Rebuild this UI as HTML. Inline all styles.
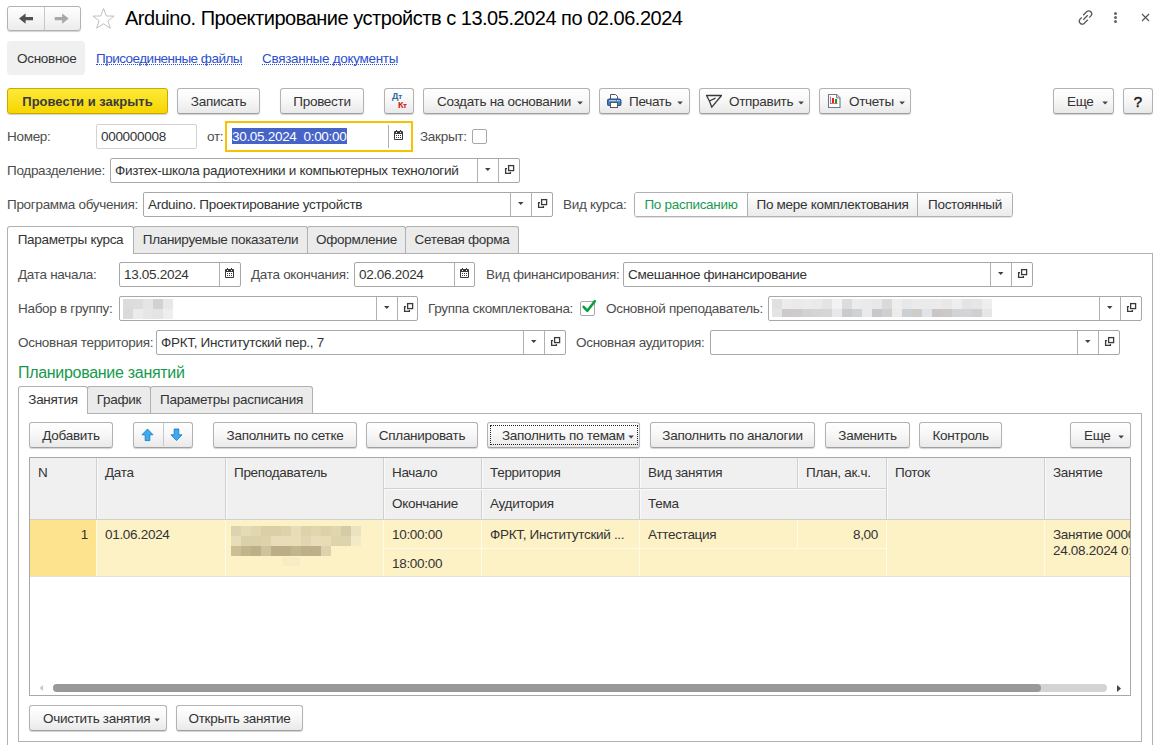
<!DOCTYPE html>
<html><head><meta charset="utf-8">
<style>
html,body{margin:0;padding:0;background:#fff;width:1162px;height:745px;overflow:hidden;position:relative}
body{font-family:"Liberation Sans",sans-serif;font-size:13.5px;letter-spacing:-0.3px;color:#333}
div,span{box-sizing:border-box}
.a{position:absolute}
.t{position:absolute;white-space:nowrap;line-height:15px;height:15px;color:#4d4d4d}
.v{color:#333}
.btn{position:absolute;height:26px;border:1px solid #b3b3b3;border-bottom-color:#a0a0a0;border-radius:3px;background:linear-gradient(#fff 0%,#f8f8f8 45%,#e9e9e9 100%);box-shadow:0 1px 1px rgba(0,0,0,.18);color:#333;white-space:nowrap;line-height:25px;text-align:center}
.inp{position:absolute;height:25px;border:1px solid #a8a8a8;border-radius:2px;background:#fff;white-space:nowrap;line-height:24px;color:#333;overflow:hidden}
.dv{position:absolute;top:0;bottom:0;width:1px;background:#b0b0b0}
.dd{position:absolute;top:9px;width:0;height:0;border-left:3.5px solid transparent;border-right:3.5px solid transparent;border-top:3.5px solid #444}
.arr{display:inline-block;width:0;height:0;border-left:3px solid transparent;border-right:3px solid transparent;border-top:3px solid #505050;vertical-align:middle;margin-left:7px;position:relative;top:-1px}
.tab{position:absolute;height:27px;border:1px solid #b0b0b0;border-bottom:none;border-radius:3px 3px 0 0;background:#ebebeb;color:#333;line-height:26px;white-space:nowrap;text-align:center}
.tab.act{background:#fff;height:28px}
.pnl{position:absolute;border:1px solid #b0b0b0}
</style></head><body>

<!-- header -->
<div class="a" style="left:7px;top:6px;width:74px;height:25px;border:1px solid #b3b3b3;border-radius:3px;background:linear-gradient(#fff,#ececec);box-shadow:0 1px 1px rgba(0,0,0,.18)"></div>
<div class="a" style="left:44px;top:7px;width:1px;height:23px;background:#c8c8c8"></div>
<svg class="a" style="left:17px;top:11px" width="20" height="14" viewBox="0 0 20 14"><path d="M2 7.6 L8.6 2.4 L8.6 6 L16 6 L16 9.3 L8.6 9.3 L8.6 12.8 Z" fill="#505050"/></svg>
<svg class="a" style="left:54px;top:11px" width="20" height="14" viewBox="0 0 20 14"><path d="M14.7 7.6 L8.1 2.4 L8.1 6 L0.7 6 L0.7 9.3 L8.1 9.3 L8.1 12.8 Z" fill="#a8a8a8"/></svg>
<svg class="a" style="left:91px;top:7px" width="25" height="23" viewBox="0 0 26 23"><path d="M13 1.2 L15.9 8.9 L24 9 L17.6 13.9 L20.1 21.6 L13 17 L5.9 21.6 L8.4 13.9 L2 9 L10.1 8.9 Z" fill="none" stroke="#bdbdbd" stroke-width="1"/></svg>
<div class="t" style="left:125px;top:7px;font-size:20px;letter-spacing:-0.48px;line-height:22px;height:22px;color:#000">Arduino. Проектирование устройств с 13.05.2024 по 02.06.2024</div>
<svg class="a" style="left:1077px;top:8.5px" width="17" height="17" viewBox="0 0 17 17"><g fill="none" stroke="#555" stroke-width="1.25" stroke-linecap="butt"><path d="M12.2 8.6 L14.1 6.7 A3 3 0 0 0 9.9 2.5 L6.2 6.2"/><path d="M4.8 8.4 L2.9 10.3 A3 3 0 0 0 7.1 14.5 L10.8 10.8"/><path d="M6.3 10.7 L10.7 6.3"/></g></svg>
<div class="a" style="left:1113.5px;top:12px;width:3px;height:3px;border-radius:50%;background:#666"></div>
<div class="a" style="left:1113.5px;top:16px;width:3px;height:3px;border-radius:50%;background:#666"></div>
<div class="a" style="left:1113.5px;top:20px;width:3px;height:3px;border-radius:50%;background:#666"></div>
<svg class="a" style="left:1141px;top:13px" width="10" height="10" viewBox="0 0 10 10"><path d="M1 1 L8 8 M8 1 L1 8" stroke="#555" stroke-width="1.2"/></svg>

<!-- nav tabs -->
<div class="a" style="left:7px;top:41px;width:78px;height:34px;background:#f0f0f0;border-radius:4px"></div>
<div class="t v" style="left:17px;top:51px">Основное</div>
<div class="t" style="left:96px;top:51px;color:#2b4fd0;letter-spacing:-0.52px">Присоединенные файлы</div>
<div class="a" style="left:96px;top:64px;width:146px;height:1px;border-top:1px dotted #2b4fd0"></div>
<div class="t" style="left:262px;top:51px;color:#2b4fd0">Связанные документы</div>
<div class="a" style="left:262px;top:64px;width:135px;height:1px;border-top:1px dotted #2b4fd0"></div>

<!-- toolbar -->
<div class="btn" style="left:7px;top:88px;width:161px;background:linear-gradient(#fde93a,#f6d600);border-color:#c8ab00;font-weight:bold;font-size:13px;letter-spacing:0;color:#3b3b3b">Провести и закрыть</div>
<div class="btn" style="left:177px;top:88px;width:83px">Записать</div>
<div class="btn" style="left:280px;top:88px;width:84px">Провести</div>
<div class="btn" style="left:384px;top:88px;width:30px"></div>
<div class="btn" style="left:423px;top:88px;width:167px;text-align:left;padding-left:13px">Создать на основании</div>
<div class="btn" style="left:599px;top:88px;width:91px;text-align:left;padding-left:29px">Печать</div>
<div class="btn" style="left:699px;top:88px;width:111px;text-align:left;padding-left:29px">Отправить</div>
<div class="btn" style="left:819px;top:88px;width:92px;text-align:left;padding-left:29px">Отчеты</div>
<div class="btn" style="left:1053px;top:88px;width:61px;text-align:left;padding-left:13px">Еще</div>
<div class="btn" style="left:1123px;top:88px;width:30px;color:#1a1a1a;font-size:15px;letter-spacing:0;-webkit-text-stroke:0.5px #1a1a1a;line-height:26px">?</div>

<!-- Номер row -->
<div class="t" style="left:7px;top:129px">Номер:</div>
<div class="inp" style="left:96px;top:124px;width:101px;padding-left:4px;border-color:#d2d2d2">000000008</div>
<div class="t" style="left:207px;top:129px">от:</div>
<div class="a" style="left:225px;top:121px;width:188px;height:31px;border:2px solid #f7c300"></div>
<div class="a" style="left:232px;top:128px;width:115px;height:16px;background:#4664c8"></div>
<div class="t" style="left:232px;top:129px;color:#fff">30.05.2024&nbsp;&nbsp;0:00:00</div>
<div class="a" style="left:388px;top:125px;width:1px;height:23px;background:#b0b0b0"></div>
<div class="t" style="left:420px;top:129px">Закрыт:</div>
<div class="a" style="left:472px;top:129px;width:15px;height:15px;border:1px solid #a8a8a8;border-radius:2px;background:#fff"></div>

<!-- Подразделение -->
<div class="t" style="left:7px;top:163px">Подразделение:</div>
<div class="inp" style="left:110px;top:158px;width:410px;padding-left:4px">Физтех-школа радиотехники и компьютерных технологий
  <div class="dv" style="left:366px"></div><div class="dv" style="left:387px"></div></div>

<!-- Программа -->
<div class="t" style="left:7px;top:197px">Программа обучения:</div>
<div class="inp" style="left:143px;top:192px;width:410px;padding-left:4px">Arduino. Проектирование устройств
  <div class="dv" style="left:366px"></div><div class="dv" style="left:387px"></div></div>
<div class="t" style="left:563px;top:197px">Вид курса:</div>
<div class="a" style="left:634px;top:192px;width:379px;height:25px;border:1px solid #b0b0b0;border-radius:3px;overflow:hidden;box-shadow:0 1px 1px rgba(0,0,0,.12)">
  <div class="a" style="left:0;top:0;width:112px;height:23px;background:#fff;color:#1a9a52;line-height:24px;text-align:center">По расписанию</div>
  <div class="a" style="left:112px;top:0;width:1px;height:23px;background:#b0b0b0"></div>
  <div class="a" style="left:113px;top:0;width:169px;height:23px;background:linear-gradient(#fff,#ebebeb);line-height:24px;text-align:center">По мере комплектования</div>
  <div class="a" style="left:282px;top:0;width:1px;height:23px;background:#b0b0b0"></div>
  <div class="a" style="left:283px;top:0;width:94px;height:23px;background:linear-gradient(#fff,#ebebeb);line-height:24px;text-align:center">Постоянный</div>
</div>

<!-- tabs -->
<div class="pnl" style="left:7px;top:253px;width:1146px;height:520px"></div>
<div class="tab" style="left:133px;top:226px;width:175px">Планируемые показатели</div>
<div class="tab" style="left:307px;top:226px;width:99px">Оформление</div>
<div class="tab" style="left:405px;top:226px;width:114px">Сетевая форма</div>
<div class="tab act" style="left:7px;top:226px;width:127px">Параметры курса</div>

<!-- panel row 1 -->
<div class="t" style="left:18px;top:267px">Дата начала:</div>
<div class="inp" style="left:119px;top:262px;width:122px;padding-left:4px">13.05.2024<div class="dv" style="left:99px"></div></div>
<div class="t" style="left:251px;top:267px">Дата окончания:</div>
<div class="inp" style="left:354px;top:262px;width:121px;padding-left:4px">02.06.2024<div class="dv" style="left:99px"></div></div>
<div class="t" style="left:486px;top:267px">Вид финансирования:</div>
<div class="inp" style="left:623px;top:262px;width:410px;padding-left:4px">Смешанное финансирование<div class="dv" style="left:366px"></div><div class="dv" style="left:387px"></div></div>

<!-- panel row 2 -->
<div class="t" style="left:18px;top:301px">Набор в группу:</div>
<div class="inp" style="left:119px;top:296px;width:299px"><div class="dv" style="left:256px"></div><div class="dv" style="left:277px"></div></div>
<div class="t" style="left:428px;top:301px">Группа скомплектована:</div>
<div class="a" style="left:580px;top:301px;width:15px;height:15px;border:1px solid #a8a8a8;border-radius:2px;background:#fff"></div>
<div class="t" style="left:606px;top:301px">Основной преподаватель:</div>
<div class="inp" style="left:768px;top:296px;width:374px"><div class="dv" style="left:330px"></div><div class="dv" style="left:351px"></div></div>

<!-- panel row 3 -->
<div class="t" style="left:18px;top:335px">Основная территория:</div>
<div class="inp" style="left:156px;top:330px;width:410px;padding-left:4px">ФРКТ, Институтский пер., 7<div class="dv" style="left:366px"></div><div class="dv" style="left:387px"></div></div>
<div class="t" style="left:576px;top:335px">Основная аудитория:</div>
<div class="inp" style="left:710px;top:330px;width:410px"><div class="dv" style="left:366px"></div><div class="dv" style="left:387px"></div></div>

<div class="t" style="left:18px;top:364px;font-size:16px;letter-spacing:-0.3px;line-height:17px;height:17px;color:#179a4c">Планирование занятий</div>

<!-- inner tabs -->
<div class="pnl" style="left:18px;top:413px;width:1124px;height:329px"></div>
<div class="tab" style="left:87px;top:386px;width:64px">График</div>
<div class="tab" style="left:150px;top:386px;width:163px">Параметры расписания</div>
<div class="tab act" style="left:18px;top:386px;width:70px">Занятия</div>

<!-- inner toolbar -->
<div class="btn" style="left:29px;top:422px;width:84px">Добавить</div>
<div class="btn" style="left:133px;top:422px;width:60px"></div>
<div class="a" style="left:163px;top:423px;width:1px;height:23px;background:#c8c8c8"></div>
<div class="btn" style="left:213px;top:422px;width:144px">Заполнить по сетке</div>
<div class="btn" style="left:366px;top:422px;width:112px">Спланировать</div>
<div class="btn" style="left:487px;top:422px;width:153px;text-align:left;padding-left:14px">Заполнить по темам</div>
<div class="btn" style="left:650px;top:422px;width:165px">Заполнить по аналогии</div>
<div class="btn" style="left:825px;top:422px;width:85px">Заменить</div>
<div class="btn" style="left:919px;top:422px;width:83px">Контроль</div>
<div class="btn" style="left:1070px;top:422px;width:61px;text-align:left;padding-left:13px">Еще</div>

<!-- grid -->
<div class="a" style="left:29px;top:457px;width:1102px;height:239px;border:1px solid #a8a8a8;overflow:hidden;background:#fff">
<div class="a" style="left:0px;top:0px;width:1100px;height:61px;background:#f0f0f0"></div>
<div class="a" style="left:66px;top:0px;width:1px;height:61px;background:#d0d0d0"></div>
<div class="a" style="left:67px;top:0px;width:1px;height:61px;background:#fafafa"></div>
<div class="a" style="left:195px;top:0px;width:1px;height:61px;background:#d0d0d0"></div>
<div class="a" style="left:196px;top:0px;width:1px;height:61px;background:#fafafa"></div>
<div class="a" style="left:353px;top:0px;width:1px;height:61px;background:#d0d0d0"></div>
<div class="a" style="left:354px;top:0px;width:1px;height:61px;background:#fafafa"></div>
<div class="a" style="left:451px;top:0px;width:1px;height:61px;background:#d0d0d0"></div>
<div class="a" style="left:452px;top:0px;width:1px;height:61px;background:#fafafa"></div>
<div class="a" style="left:609px;top:0px;width:1px;height:61px;background:#d0d0d0"></div>
<div class="a" style="left:610px;top:0px;width:1px;height:61px;background:#fafafa"></div>
<div class="a" style="left:856px;top:0px;width:1px;height:61px;background:#d0d0d0"></div>
<div class="a" style="left:857px;top:0px;width:1px;height:61px;background:#fafafa"></div>
<div class="a" style="left:1014px;top:0px;width:1px;height:61px;background:#d0d0d0"></div>
<div class="a" style="left:1015px;top:0px;width:1px;height:61px;background:#fafafa"></div>
<div class="a" style="left:767px;top:0px;width:1px;height:30px;background:#d0d0d0"></div>
<div class="a" style="left:768px;top:0px;width:1px;height:30px;background:#fafafa"></div>
<div class="a" style="left:353px;top:30px;width:503px;height:1px;background:#d0d0d0"></div>
<div class="a" style="left:354px;top:31px;width:502px;height:1px;background:#fafafa"></div>
<div class="a" style="left:0px;top:61px;width:1100px;height:1px;background:#d0d0d0"></div>
<div class="a" style="left:0px;top:62px;width:66px;height:56px;background:#fde38e"></div>
<div class="a" style="left:66px;top:62px;width:1034px;height:56px;background:#fdf1c6"></div>
<div class="a" style="left:66px;top:62px;width:1px;height:56px;background:#fffbea"></div>
<div class="a" style="left:195px;top:62px;width:1px;height:56px;background:#fffbea"></div>
<div class="a" style="left:353px;top:62px;width:1px;height:56px;background:#fffbea"></div>
<div class="a" style="left:451px;top:62px;width:1px;height:56px;background:#fffbea"></div>
<div class="a" style="left:609px;top:62px;width:1px;height:56px;background:#fffbea"></div>
<div class="a" style="left:856px;top:62px;width:1px;height:56px;background:#fffbea"></div>
<div class="a" style="left:1014px;top:62px;width:1px;height:56px;background:#fffbea"></div>
<div class="a" style="left:767px;top:62px;width:1px;height:28px;background:#fffbea"></div>
<div class="a" style="left:353px;top:90px;width:503px;height:1px;background:#fffbea"></div>
<div class="a" style="left:0px;top:118px;width:1100px;height:1px;background:#e2e2e2"></div>
<div class="t v" style="left:8px;top:7px;">N</div>
<div class="t v" style="left:75px;top:7px;">Дата</div>
<div class="t v" style="left:204px;top:7px;">Преподаватель</div>
<div class="t v" style="left:362px;top:7px;">Начало</div>
<div class="t v" style="left:460px;top:7px;">Территория</div>
<div class="t v" style="left:618px;top:7px;">Вид занятия</div>
<div class="t v" style="left:776px;top:7px;">План, ак.ч.</div>
<div class="t v" style="left:865px;top:7px;">Поток</div>
<div class="t v" style="left:1023px;top:7px;">Занятие</div>
<div class="t v" style="left:362px;top:38px;">Окончание</div>
<div class="t v" style="left:460px;top:38px;">Аудитория</div>
<div class="t v" style="left:618px;top:38px;">Тема</div>
<div class="t v" style="left:-142px;width:200px;text-align:right;top:69px">1</div>
<div class="t v" style="left:75px;top:69px;">01.06.2024</div>
<div class="t v" style="left:362px;top:69px;">10:00:00</div>
<div class="t v" style="left:460px;top:69px;">ФРКТ, Институтский ...</div>
<div class="t v" style="left:618px;top:69px;">Аттестация</div>
<div class="t v" style="left:648px;width:200px;text-align:right;top:69px">8,00</div>
<div class="t v" style="left:1023px;top:69px;">Занятие 0000</div>
<div class="t v" style="left:1023px;top:85px;">24.08.2024 0:</div>
<div class="t v" style="left:362px;top:98px;">18:00:00</div>
<div class="a" style="left:23px;top:226px;width:1054px;height:8px;border-radius:4px;background:#d4d4d4"></div>
<div class="a" style="left:23px;top:226px;width:988px;height:8px;border-radius:4px;background:#999"></div>
<svg class="a" style="left:8px;top:226px" width="6" height="8"><path d="M5 1 L1.5 4 L5 7Z" fill="#c8c8c8"/></svg>
<svg class="a" style="left:1086px;top:226px" width="6" height="8"><path d="M1 1 L5 4.5 L1 8Z" fill="#444"/></svg>
</div>

<!-- bottom buttons -->
<div class="btn" style="left:29px;top:705px;width:138px;text-align:left;padding-left:13px">Очистить занятия</div>
<div class="btn" style="left:176px;top:705px;width:127px">Открыть занятие</div>

<!--ICONS-->
<svg class="a" style="left:484px;top:167px" width="8" height="5" viewBox="0 0 8 5"><path d="M1 1 L6.5 1 L3.75 4 Z" fill="#404040"/></svg>
<svg class="a" style="left:504px;top:164px" width="11" height="11" viewBox="0 0 11 11"><rect x="4.6" y="1.6" width="5" height="5" fill="none" stroke="#3a3a3a" stroke-width="1.3"/><path d="M3 4.6 H1.6 V9.4 H6.4 V8" fill="none" stroke="#3a3a3a" stroke-width="1.3"/></svg>
<svg class="a" style="left:517px;top:201px" width="8" height="5" viewBox="0 0 8 5"><path d="M1 1 L6.5 1 L3.75 4 Z" fill="#404040"/></svg>
<svg class="a" style="left:537px;top:198px" width="11" height="11" viewBox="0 0 11 11"><rect x="4.6" y="1.6" width="5" height="5" fill="none" stroke="#3a3a3a" stroke-width="1.3"/><path d="M3 4.6 H1.6 V9.4 H6.4 V8" fill="none" stroke="#3a3a3a" stroke-width="1.3"/></svg>
<svg class="a" style="left:997px;top:271px" width="8" height="5" viewBox="0 0 8 5"><path d="M1 1 L6.5 1 L3.75 4 Z" fill="#404040"/></svg>
<svg class="a" style="left:1017px;top:268px" width="11" height="11" viewBox="0 0 11 11"><rect x="4.6" y="1.6" width="5" height="5" fill="none" stroke="#3a3a3a" stroke-width="1.3"/><path d="M3 4.6 H1.6 V9.4 H6.4 V8" fill="none" stroke="#3a3a3a" stroke-width="1.3"/></svg>
<svg class="a" style="left:383px;top:305px" width="8" height="5" viewBox="0 0 8 5"><path d="M1 1 L6.5 1 L3.75 4 Z" fill="#404040"/></svg>
<svg class="a" style="left:403px;top:302px" width="11" height="11" viewBox="0 0 11 11"><rect x="4.6" y="1.6" width="5" height="5" fill="none" stroke="#3a3a3a" stroke-width="1.3"/><path d="M3 4.6 H1.6 V9.4 H6.4 V8" fill="none" stroke="#3a3a3a" stroke-width="1.3"/></svg>
<svg class="a" style="left:1106px;top:305px" width="8" height="5" viewBox="0 0 8 5"><path d="M1 1 L6.5 1 L3.75 4 Z" fill="#404040"/></svg>
<svg class="a" style="left:1126px;top:302px" width="11" height="11" viewBox="0 0 11 11"><rect x="4.6" y="1.6" width="5" height="5" fill="none" stroke="#3a3a3a" stroke-width="1.3"/><path d="M3 4.6 H1.6 V9.4 H6.4 V8" fill="none" stroke="#3a3a3a" stroke-width="1.3"/></svg>
<svg class="a" style="left:530px;top:339px" width="8" height="5" viewBox="0 0 8 5"><path d="M1 1 L6.5 1 L3.75 4 Z" fill="#404040"/></svg>
<svg class="a" style="left:550px;top:336px" width="11" height="11" viewBox="0 0 11 11"><rect x="4.6" y="1.6" width="5" height="5" fill="none" stroke="#3a3a3a" stroke-width="1.3"/><path d="M3 4.6 H1.6 V9.4 H6.4 V8" fill="none" stroke="#3a3a3a" stroke-width="1.3"/></svg>
<svg class="a" style="left:1084px;top:339px" width="8" height="5" viewBox="0 0 8 5"><path d="M1 1 L6.5 1 L3.75 4 Z" fill="#404040"/></svg>
<svg class="a" style="left:1104px;top:336px" width="11" height="11" viewBox="0 0 11 11"><rect x="4.6" y="1.6" width="5" height="5" fill="none" stroke="#3a3a3a" stroke-width="1.3"/><path d="M3 4.6 H1.6 V9.4 H6.4 V8" fill="none" stroke="#3a3a3a" stroke-width="1.3"/></svg>
<svg class="a" style="left:394px;top:130px" width="9" height="10" viewBox="0 0 9 10"><rect x="0" y="1" width="9" height="9" rx="1" fill="#3a3a3a"/><rect x="1" y="4" width="7" height="5" fill="#fff"/><rect x="2" y="0" width="1" height="2" fill="#3a3a3a"/><rect x="6" y="0" width="1" height="2" fill="#3a3a3a"/><rect x="2" y="2" width="1" height="1" fill="#fff"/><rect x="6" y="2" width="1" height="1" fill="#fff"/><g fill="#3a3a3a"><rect x="2" y="5" width="1" height="1"/><rect x="4" y="5" width="1" height="1"/><rect x="6" y="5" width="1" height="1"/><rect x="2" y="7" width="1" height="1"/><rect x="4" y="7" width="1" height="1"/><rect x="6" y="7" width="1" height="1"/></g></svg>
<svg class="a" style="left:225px;top:268px" width="9" height="10" viewBox="0 0 9 10"><rect x="0" y="1" width="9" height="9" rx="1" fill="#3a3a3a"/><rect x="1" y="4" width="7" height="5" fill="#fff"/><rect x="2" y="0" width="1" height="2" fill="#3a3a3a"/><rect x="6" y="0" width="1" height="2" fill="#3a3a3a"/><rect x="2" y="2" width="1" height="1" fill="#fff"/><rect x="6" y="2" width="1" height="1" fill="#fff"/><g fill="#3a3a3a"><rect x="2" y="5" width="1" height="1"/><rect x="4" y="5" width="1" height="1"/><rect x="6" y="5" width="1" height="1"/><rect x="2" y="7" width="1" height="1"/><rect x="4" y="7" width="1" height="1"/><rect x="6" y="7" width="1" height="1"/></g></svg>
<svg class="a" style="left:460px;top:268px" width="9" height="10" viewBox="0 0 9 10"><rect x="0" y="1" width="9" height="9" rx="1" fill="#3a3a3a"/><rect x="1" y="4" width="7" height="5" fill="#fff"/><rect x="2" y="0" width="1" height="2" fill="#3a3a3a"/><rect x="6" y="0" width="1" height="2" fill="#3a3a3a"/><rect x="2" y="2" width="1" height="1" fill="#fff"/><rect x="6" y="2" width="1" height="1" fill="#fff"/><g fill="#3a3a3a"><rect x="2" y="5" width="1" height="1"/><rect x="4" y="5" width="1" height="1"/><rect x="6" y="5" width="1" height="1"/><rect x="2" y="7" width="1" height="1"/><rect x="4" y="7" width="1" height="1"/><rect x="6" y="7" width="1" height="1"/></g></svg>
<div class="a" style="left:123px;top:299px;width:10px;height:10px;background:#dcdcdc"></div>
<div class="a" style="left:133px;top:299px;width:10px;height:10px;background:#dedddb"></div>
<div class="a" style="left:143px;top:299px;width:10px;height:10px;background:#e4e5e8"></div>
<div class="a" style="left:153px;top:299px;width:10px;height:10px;background:#d2d2d2"></div>
<div class="a" style="left:163px;top:299px;width:10px;height:10px;background:#e8e8e8"></div>
<div class="a" style="left:123px;top:309px;width:10px;height:10px;background:#d8dadd"></div>
<div class="a" style="left:133px;top:309px;width:10px;height:10px;background:#ebebeb"></div>
<div class="a" style="left:143px;top:309px;width:10px;height:10px;background:#e6e6e6"></div>
<div class="a" style="left:153px;top:309px;width:10px;height:10px;background:#e4e4e4"></div>
<div class="a" style="left:163px;top:309px;width:10px;height:10px;background:#eeeeee"></div>
<div class="a" style="left:772px;top:299px;width:10px;height:10px;background:#e0e0e0"></div>
<div class="a" style="left:782px;top:299px;width:10px;height:10px;background:#ececec"></div>
<div class="a" style="left:792px;top:299px;width:10px;height:10px;background:#eaeaea"></div>
<div class="a" style="left:802px;top:299px;width:10px;height:10px;background:#ececec"></div>
<div class="a" style="left:812px;top:299px;width:10px;height:10px;background:#eaeaea"></div>
<div class="a" style="left:822px;top:299px;width:10px;height:10px;background:#e4e4e4"></div>
<div class="a" style="left:832px;top:299px;width:10px;height:10px;background:#f2f2f4"></div>
<div class="a" style="left:842px;top:299px;width:10px;height:10px;background:#dcdcdc"></div>
<div class="a" style="left:852px;top:299px;width:10px;height:10px;background:#eaecef"></div>
<div class="a" style="left:862px;top:299px;width:10px;height:10px;background:#eaeaea"></div>
<div class="a" style="left:872px;top:299px;width:10px;height:10px;background:#e8e8e8"></div>
<div class="a" style="left:882px;top:299px;width:10px;height:10px;background:#d8dadc"></div>
<div class="a" style="left:892px;top:299px;width:10px;height:10px;background:#f0eeea"></div>
<div class="a" style="left:902px;top:299px;width:10px;height:10px;background:#e6e8ea"></div>
<div class="a" style="left:912px;top:299px;width:10px;height:10px;background:#ebebeb"></div>
<div class="a" style="left:922px;top:299px;width:10px;height:10px;background:#eaeaea"></div>
<div class="a" style="left:932px;top:299px;width:10px;height:10px;background:#ebebeb"></div>
<div class="a" style="left:942px;top:299px;width:10px;height:10px;background:#e8e8e8"></div>
<div class="a" style="left:952px;top:299px;width:10px;height:10px;background:#eeeeee"></div>
<div class="a" style="left:962px;top:299px;width:10px;height:10px;background:#e4e4e4"></div>
<div class="a" style="left:972px;top:299px;width:10px;height:10px;background:#e6e6e6"></div>
<div class="a" style="left:982px;top:299px;width:10px;height:10px;background:#eeeeee"></div>
<div class="a" style="left:772px;top:309px;width:10px;height:8px;background:#e4e4e4"></div>
<div class="a" style="left:782px;top:309px;width:10px;height:8px;background:#cbcbcb"></div>
<div class="a" style="left:792px;top:309px;width:10px;height:8px;background:#cfcbcb"></div>
<div class="a" style="left:802px;top:309px;width:10px;height:8px;background:#d2d2d2"></div>
<div class="a" style="left:812px;top:309px;width:10px;height:8px;background:#d4d4d4"></div>
<div class="a" style="left:822px;top:309px;width:10px;height:8px;background:#d6d6d6"></div>
<div class="a" style="left:832px;top:309px;width:10px;height:8px;background:#e8e8e8"></div>
<div class="a" style="left:842px;top:309px;width:10px;height:8px;background:#cacace"></div>
<div class="a" style="left:852px;top:309px;width:10px;height:8px;background:#d0d2d2"></div>
<div class="a" style="left:862px;top:309px;width:10px;height:8px;background:#eaeaea"></div>
<div class="a" style="left:872px;top:309px;width:10px;height:8px;background:#c8c8cc"></div>
<div class="a" style="left:882px;top:309px;width:10px;height:8px;background:#cfcfcf"></div>
<div class="a" style="left:892px;top:309px;width:10px;height:8px;background:#ececea"></div>
<div class="a" style="left:902px;top:309px;width:10px;height:8px;background:#ccd0d4"></div>
<div class="a" style="left:912px;top:309px;width:10px;height:8px;background:#cfcbc8"></div>
<div class="a" style="left:922px;top:309px;width:10px;height:8px;background:#e0e4e8"></div>
<div class="a" style="left:932px;top:309px;width:10px;height:8px;background:#cac6c4"></div>
<div class="a" style="left:942px;top:309px;width:10px;height:8px;background:#ccc8c6"></div>
<div class="a" style="left:952px;top:309px;width:10px;height:8px;background:#d0d4d6"></div>
<div class="a" style="left:962px;top:309px;width:10px;height:8px;background:#d2d4d6"></div>
<div class="a" style="left:972px;top:309px;width:10px;height:8px;background:#d0d0d2"></div>
<div class="a" style="left:982px;top:309px;width:10px;height:8px;background:#e6e6e6"></div>
<div class="a" style="left:231px;top:526px;width:10px;height:10px;background:#ddd3ae"></div>
<div class="a" style="left:241px;top:526px;width:10px;height:10px;background:#e4dab5"></div>
<div class="a" style="left:251px;top:526px;width:10px;height:10px;background:#e1d6ad"></div>
<div class="a" style="left:261px;top:526px;width:10px;height:10px;background:#dacfa7"></div>
<div class="a" style="left:271px;top:526px;width:10px;height:10px;background:#dacfa7"></div>
<div class="a" style="left:281px;top:526px;width:10px;height:10px;background:#ddd2aa"></div>
<div class="a" style="left:291px;top:526px;width:10px;height:10px;background:#e8ddb8"></div>
<div class="a" style="left:301px;top:526px;width:10px;height:10px;background:#ddd3aa"></div>
<div class="a" style="left:311px;top:526px;width:10px;height:10px;background:#e1d6ad"></div>
<div class="a" style="left:321px;top:526px;width:10px;height:10px;background:#ddd1a9"></div>
<div class="a" style="left:331px;top:526px;width:10px;height:10px;background:#e1d6ad"></div>
<div class="a" style="left:341px;top:526px;width:10px;height:10px;background:#d6cba6"></div>
<div class="a" style="left:351px;top:526px;width:10px;height:10px;background:#ebe2bf"></div>
<div class="a" style="left:231px;top:536px;width:10px;height:10px;background:#e8ddb8"></div>
<div class="a" style="left:241px;top:536px;width:10px;height:10px;background:#dad0aa"></div>
<div class="a" style="left:251px;top:536px;width:10px;height:10px;background:#dad0a9"></div>
<div class="a" style="left:261px;top:536px;width:10px;height:10px;background:#ddd2aa"></div>
<div class="a" style="left:271px;top:536px;width:10px;height:10px;background:#e8ddb8"></div>
<div class="a" style="left:281px;top:536px;width:10px;height:10px;background:#e8ddb8"></div>
<div class="a" style="left:291px;top:536px;width:10px;height:10px;background:#e8ddb8"></div>
<div class="a" style="left:301px;top:536px;width:10px;height:10px;background:#e1d6ae"></div>
<div class="a" style="left:311px;top:536px;width:10px;height:10px;background:#e8ddb8"></div>
<div class="a" style="left:321px;top:536px;width:10px;height:10px;background:#e8dcb5"></div>
<div class="a" style="left:331px;top:536px;width:10px;height:10px;background:#ddd3ac"></div>
<div class="a" style="left:341px;top:536px;width:10px;height:10px;background:#ddd3ac"></div>
<div class="a" style="left:351px;top:536px;width:10px;height:10px;background:#f2e9c9"></div>
<div class="a" style="left:231px;top:546px;width:10px;height:10px;background:#cbbf95"></div>
<div class="a" style="left:241px;top:546px;width:10px;height:10px;background:#c2b58b"></div>
<div class="a" style="left:251px;top:546px;width:10px;height:10px;background:#bdb088"></div>
<div class="a" style="left:261px;top:546px;width:10px;height:10px;background:#cfc39b"></div>
<div class="a" style="left:271px;top:546px;width:10px;height:10px;background:#bbae86"></div>
<div class="a" style="left:281px;top:546px;width:10px;height:10px;background:#bbae86"></div>
<div class="a" style="left:291px;top:546px;width:10px;height:10px;background:#c2b48c"></div>
<div class="a" style="left:301px;top:546px;width:10px;height:10px;background:#bdb088"></div>
<div class="a" style="left:311px;top:546px;width:10px;height:10px;background:#bdb088"></div>
<div class="a" style="left:321px;top:546px;width:10px;height:10px;background:#ddd2ac"></div>
<div class="a" style="left:282px;top:557px;width:18px;height:9px;background:#f6ecc6"></div>
<svg class="a" style="left:580px;top:298px" width="18" height="16" viewBox="0 0 18 16"><path d="M3.6 8.8 L7.4 12.8 L14.8 3.2" fill="none" stroke="#0c9b3e" stroke-width="2.6" stroke-linecap="round" stroke-linejoin="round"/></svg>
<svg class="a" style="left:607px;top:94px" width="15" height="14" viewBox="0 0 15 14"><path d="M3.5 5 V0.5 H8.5 L10.5 2.5 V5" fill="#fff" stroke="#555" stroke-width="1"/><rect x="0.6" y="5.1" width="13.3" height="6.4" rx="1.6" fill="#4a7fc2" stroke="#255590" stroke-width="1.2"/><rect x="2" y="6.3" width="7" height="0.9" fill="#cfe0f5"/><rect x="10" y="6.2" width="1" height="1" fill="#fff"/><rect x="11.6" y="6.2" width="1" height="1" fill="#fff"/><rect x="3.5" y="8.5" width="7" height="5" fill="#fff" stroke="#555" stroke-width="1"/></svg>
<svg class="a" style="left:704px;top:93px" width="20" height="17" viewBox="0 0 20 17"><path d="M2.5 2.5 L17.5 2.5 L7.8 14.2 L5.4 8 Z M5.4 8 L11.5 5.2" fill="none" stroke="#3a3a3a" stroke-width="1.3" stroke-linejoin="round"/></svg>
<svg class="a" style="left:827px;top:93px" width="15" height="16" viewBox="0 0 15 16"><path d="M1.5 1.5 H9.5 L13 5 V14.5 H1.5 Z" fill="#fff" stroke="#6e7a88" stroke-width="1.1" stroke-linejoin="round"/><path d="M9.5 1.5 V5 H13" fill="#c9d4e0" stroke="#6e7a88" stroke-width="0.8"/><rect x="3" y="3.6" width="0.8" height="7.4" fill="#c05080"/><rect x="3" y="10.2" width="7.5" height="0.8" fill="#c05080"/><rect x="5" y="5" width="2" height="5" fill="#ee1c1c"/><rect x="8" y="6" width="2" height="4.2" fill="#10a020"/></svg>
<div class="a" style="left:392px;top:91px;font:bold 9px 'Liberation Sans';letter-spacing:-0.3px;color:#2a68a8;line-height:11px">Д<span style="font-size:8px">т</span></div>
<div class="a" style="left:398px;top:100px;font:bold 9px 'Liberation Sans';letter-spacing:-0.5px;color:#d0140c;line-height:11px">К<span style="font-size:8px">т</span></div>
<svg class="a" style="left:141px;top:428px" width="13" height="14" viewBox="0 0 13 14"><path d="M6.5 1 L12 6.8 H8.8 V12.6 H4.2 V6.8 H1 Z" fill="#3daaf2" stroke="#1d7fc4" stroke-width="0.9" stroke-linejoin="round"/></svg>
<svg class="a" style="left:170px;top:428px" width="13" height="14" viewBox="0 0 13 14"><path d="M6.5 12.6 L12 6.8 H8.8 V1 H4.2 V6.8 H1 Z" fill="#3daaf2" stroke="#1d7fc4" stroke-width="0.9" stroke-linejoin="round"/></svg>
<div class="a" style="left:490px;top:425px;width:148px;height:20px;border:1px dotted #222"></div>
<svg class="a" style="left:576.5px;top:100.5px" width="7" height="5" viewBox="0 0 7 5"><path d="M0.3 0.5 L5.9 0.5 L3.1 3.4 Z" fill="#444"/></svg>
<svg class="a" style="left:676.5px;top:100.5px" width="7" height="5" viewBox="0 0 7 5"><path d="M0.3 0.5 L5.9 0.5 L3.1 3.4 Z" fill="#444"/></svg>
<svg class="a" style="left:798.0px;top:100.5px" width="7" height="5" viewBox="0 0 7 5"><path d="M0.3 0.5 L5.9 0.5 L3.1 3.4 Z" fill="#444"/></svg>
<svg class="a" style="left:898.5px;top:100.5px" width="7" height="5" viewBox="0 0 7 5"><path d="M0.3 0.5 L5.9 0.5 L3.1 3.4 Z" fill="#444"/></svg>
<svg class="a" style="left:1101.5px;top:100.5px" width="7" height="5" viewBox="0 0 7 5"><path d="M0.3 0.5 L5.9 0.5 L3.1 3.4 Z" fill="#444"/></svg>
<svg class="a" style="left:628.0px;top:435.0px" width="7" height="5" viewBox="0 0 7 5"><path d="M0.3 0.5 L5.9 0.5 L3.1 3.4 Z" fill="#444"/></svg>
<svg class="a" style="left:1117.5px;top:435.0px" width="7" height="5" viewBox="0 0 7 5"><path d="M0.3 0.5 L5.9 0.5 L3.1 3.4 Z" fill="#444"/></svg>
<svg class="a" style="left:154.0px;top:718.0px" width="7" height="5" viewBox="0 0 7 5"><path d="M0.3 0.5 L5.9 0.5 L3.1 3.4 Z" fill="#444"/></svg>
<!--/ICONS-->
</body></html>
